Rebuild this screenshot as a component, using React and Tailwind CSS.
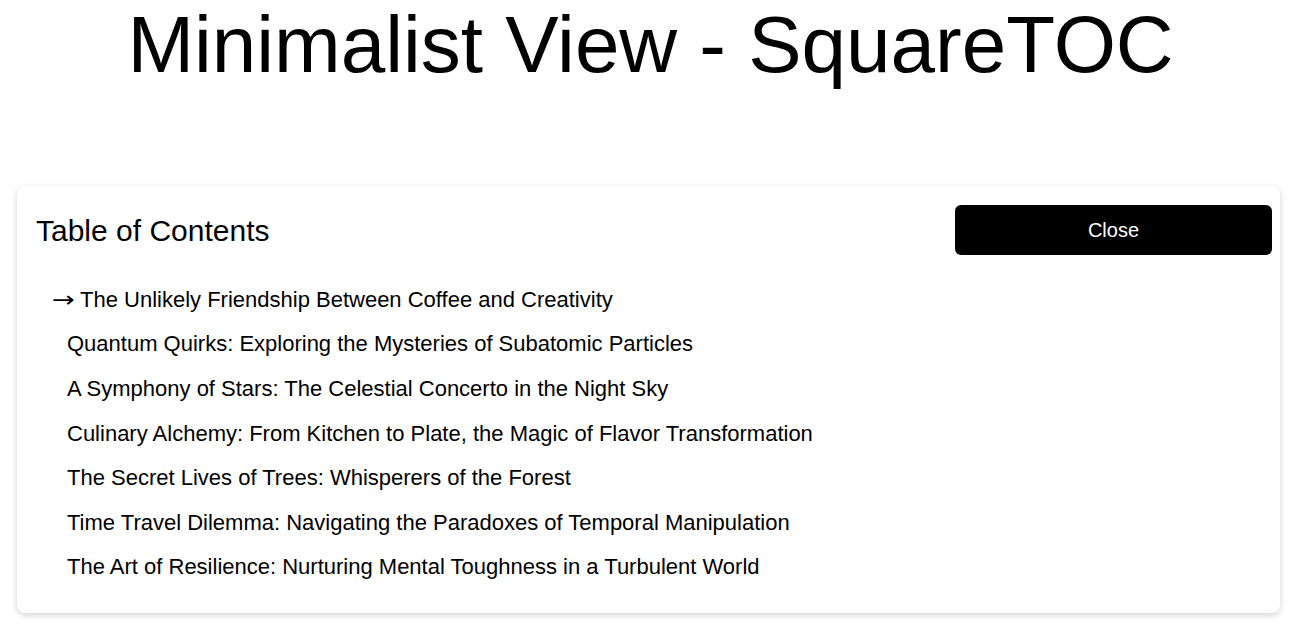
import { useState } from 'react';

const ITEMS = [
  'The Unlikely Friendship Between Coffee and Creativity',
  'Quantum Quirks: Exploring the Mysteries of Subatomic Particles',
  'A Symphony of Stars: The Celestial Concerto in the Night Sky',
  'Culinary Alchemy: From Kitchen to Plate, the Magic of Flavor Transformation',
  'The Secret Lives of Trees: Whisperers of the Forest',
  'Time Travel Dilemma: Navigating the Paradoxes of Temporal Manipulation',
  'The Art of Resilience: Nurturing Mental Toughness in a Turbulent World',
];

export default function App() {
  const [active, setActive] = useState(0);

  return (
    <div className="min-h-screen bg-white text-black font-['Liberation_Sans',Arial,sans-serif]">
      <h1 className="text-center text-[80px] leading-[90px]">Minimalist View - SquareTOC</h1>

      {/* TOC card */}
      <div className="ml-[17px] mr-[21px] mt-[96px] rounded-lg bg-white shadow-[0_2px_6px_rgba(0,0,0,0.18)] pl-[19px] pr-[8px] pt-[19px] pb-[24px]">
        <div className="flex items-center justify-between">
          <h2 className="text-[30px]">Table of Contents</h2>
          <button className="w-[317px] h-[50px] rounded-md bg-black text-white text-[20px]">Close</button>
        </div>
        <ul className="mt-[22px] pl-[31px]">
          {ITEMS.map((t, i) => (
            <li
              key={i}
              onClick={() => setActive(i)}
              className="h-[44.6px] flex items-center text-[22px] cursor-pointer"
            >
              {i === active ? (
                <span className="-ml-[15px] flex items-center">
                  <span className="font-['DejaVu_Sans',sans-serif] inline-block w-[28px] scale-x-125 origin-left">→</span>
                  {t}
                </span>
              ) : (
                t
              )}
            </li>
          ))}
        </ul>
      </div>
    </div>
  );
}
